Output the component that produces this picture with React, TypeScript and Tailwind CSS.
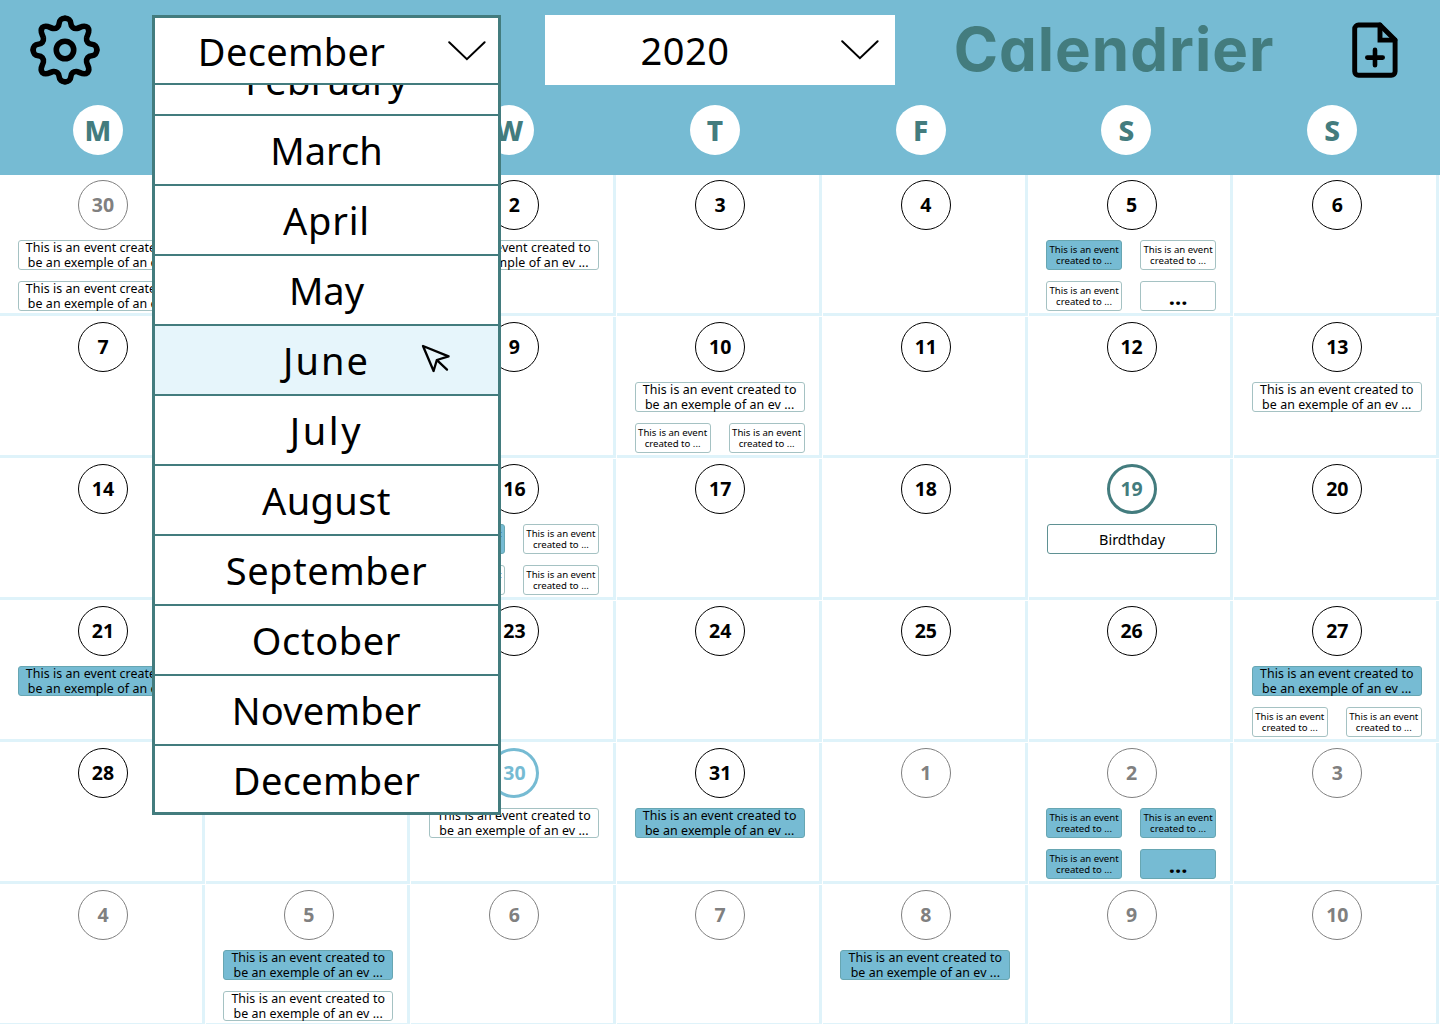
type Tone = "white" | "blue";
type EventItem = { kind: "wide" | "small" | "more" | "named"; tone: Tone };
type Day = { n?: number; look?: "muted" | "today" | "picked"; events?: EventItem[] };

const wide = (tone: Tone): EventItem => ({ kind: "wide", tone });
const small = (tone: Tone): EventItem => ({ kind: "small", tone });
const more = (tone: Tone): EventItem => ({ kind: "more", tone });

// Days without a number lie entirely behind the open month menu.
const DAYS: Day[] = [
  { n: 30, look: "muted", events: [wide("white"), wide("white")] },
  {},
  { n: 2, events: [wide("white")] },
  { n: 3 },
  { n: 4 },
  { n: 5, events: [small("blue"), small("white"), small("white"), more("white")] },
  { n: 6 },
  { n: 7 },
  {},
  { n: 9 },
  { n: 10, events: [wide("white"), small("white"), small("white")] },
  { n: 11 },
  { n: 12 },
  { n: 13, events: [wide("white")] },
  { n: 14 },
  {},
  { n: 16, events: [small("blue"), small("white"), small("white"), small("white")] },
  { n: 17 },
  { n: 18 },
  { n: 19, look: "today", events: [{ kind: "named", tone: "white" }] },
  { n: 20 },
  { n: 21, events: [wide("blue")] },
  {},
  { n: 23 },
  { n: 24 },
  { n: 25 },
  { n: 26 },
  { n: 27, events: [wide("blue"), small("white"), small("white")] },
  { n: 28 },
  {},
  { n: 30, look: "picked", events: [wide("white")] },
  { n: 31, events: [wide("blue")] },
  { n: 1, look: "muted" },
  { n: 2, look: "muted", events: [small("blue"), small("blue"), small("blue"), more("blue")] },
  { n: 3, look: "muted" },
  { n: 4, look: "muted" },
  { n: 5, look: "muted", events: [wide("blue"), wide("white")] },
  { n: 6, look: "muted" },
  { n: 7, look: "muted" },
  { n: 8, look: "muted", events: [wide("blue")] },
  { n: 9, look: "muted" },
  { n: 10, look: "muted" },
];

const MONTHS = [
  { name: "February", spacing: "tracking-[0.3px]" },
  { name: "March", spacing: "tracking-normal" },
  { name: "April", spacing: "tracking-[0.8px]" },
  { name: "May", spacing: "tracking-normal" },
  { name: "June", spacing: "tracking-[2px]" },
  { name: "July", spacing: "tracking-[2.6px]" },
  { name: "August", spacing: "tracking-[0.4px]" },
  { name: "September", spacing: "tracking-[0.5px]" },
  { name: "October", spacing: "tracking-[0.6px]" },
  { name: "November", spacing: "tracking-[0.2px]" },
  { name: "December", spacing: "tracking-[0.3px]" },
];
const WEEKDAYS = ["M", "", "W", "T", "F", "S", "S"];

const LOOKS = {
  normal: "border border-black text-black",
  muted: "border border-[#808080] text-[#808080]",
  today: "border-3 border-[#437c7e] text-[#437c7e]",
  picked: "border-3 border-[#76bbd3] text-[#76bbd3]",
};

function GearIcon() {
  return (
    <svg width="70" height="70" viewBox="-35 -35 70 70" fill="none" stroke="black" strokeWidth="5.6" strokeLinecap="round">
      {[0, 90, 180, 270].map((angle) => (
        <path
          key={angle}
          transform={`rotate(${angle})`}
          d="M0-31.8C3.4-31.8 5.6-29.8 5.8-26.8C6-23.4 8.6-21 12-21.6C15-22 18.6-26 22.6-22.6C26-18.6 22-15 21.6-12C21-8.6 23.4-6 26.8-5.8C29.8-5.6 31.8-3.4 31.8 0"
        />
      ))}
      <circle r="8.7" />
    </svg>
  );
}

function NewFileIcon() {
  return (
    <svg width="46" height="56" viewBox="0 0 46 56" fill="none" stroke="black" strokeWidth="4.9" strokeLinecap="round" strokeLinejoin="round">
      <path d="M28 3H6.5A3.8 3.8 0 0 0 2.7 6.8V49.5A3.8 3.8 0 0 0 6.5 53.3H39.3A3.8 3.8 0 0 0 43.1 49.5V18.1Z" />
      <path d="M28 3V18.1H43" strokeLinejoin="miter" />
      <path d="M23 27.9V43.2M15.3 35.6H30.7" strokeWidth="4.6" />
    </svg>
  );
}

function Chevron() {
  return (
    <svg width="38" height="20" viewBox="0 0 38 20" fill="none" stroke="black" strokeWidth="2" strokeLinecap="round">
      <path d="M1.2 1.2L18.9 18.2L36.6 1.2" />
    </svg>
  );
}

function Cursor() {
  return (
    <svg width="30" height="30" viewBox="0 0 30 30" fill="none" stroke="black" strokeWidth="2.3" strokeLinecap="round" strokeLinejoin="round">
      <path d="M2 2L27.6 12.4L15.8 16L12.6 27ZM16.2 16.4L26 25.6" />
    </svg>
  );
}

function EventCard({ kind, tone }: EventItem) {
  const fill = tone === "blue" ? "bg-[#76bbd3] border-[#67a6b2]" : "bg-white border-[#a5c2c3]";
  if (kind === "wide")
    return (
      <div className={`flex h-[30px] w-[170px] flex-col items-center justify-center rounded-[3px] border text-[12.4px] leading-[15px] tracking-[0.08px] whitespace-nowrap ${fill}`}>
        <span>This is an event created to</span>
        <span>be an exemple of an ev ...</span>
      </div>
    );
  if (kind === "named")
    return (
      <div className="ml-px flex h-[30px] w-[170px] shrink-0 items-center justify-center rounded-[3px] border border-[#5f9193] bg-white pt-[2px] text-[14.4px]">
        Birdthday
      </div>
    );
  if (kind === "more")
    return (
      <div className={`flex h-[30px] w-[76px] items-center justify-center rounded-[3px] border text-[22px] leading-none font-bold ${fill}`}>
        ...
      </div>
    );
  return (
    <div className={`flex h-[30px] w-[76px] flex-col items-center justify-center rounded-[3px] border text-[9.6px] leading-[11px] whitespace-nowrap ${fill}`}>
      <span>This is an event</span>
      <span>created to ...</span>
    </div>
  );
}

function DayCell({ day }: { day: Day }) {
  return (
    <div className="pr-px pb-px">
      <div className="h-[141px] border-r-3 border-b-3 border-[#dff3fa]">
        {day.n !== undefined && (
          <div className="flex w-[206px] flex-col items-center pt-[5px]">
            <div className={`flex size-[50px] items-center justify-center rounded-full text-[19.5px] font-bold ${LOOKS[day.look ?? "normal"]}`}>
              {day.n}
            </div>
            <div className="mt-[10px] w-[171px]">
              <div className="flex flex-wrap gap-x-[18px] gap-y-[11px]">
                {day.events?.map((event, i) => <EventCard key={i} {...event} />)}
              </div>
            </div>
          </div>
        )}
      </div>
    </div>
  );
}

function MonthSelect() {
  return (
    <div className="relative z-10 h-[70px] w-[350px]">
      <div className="absolute top-0 left-0 h-[800px] w-[349px] overflow-hidden border-3 border-[#437c7e] bg-white text-[38px]">
        <div className="flex h-[67px] items-center border-b-2 border-[#437c7e]">
          <div className="w-[273px] text-center leading-[56px] tracking-[0.3px]">December</div>
          <div className="ml-[20px]">
            <Chevron />
          </div>
        </div>
        <div className="h-[727px] overflow-hidden">
          <div className="-mt-[39px]">
            {MONTHS.map(({ name, spacing }) => (
              <div
                key={name}
                className={`relative flex h-[70px] items-center justify-center border-b-2 border-[#437c7e] ${spacing} ${name === "June" ? "bg-[#e6f5fb]" : ""}`}
              >
                {name}
                {name === "June" && (
                  <div className="absolute top-[18px] left-[266px]">
                    <Cursor />
                  </div>
                )}
              </div>
            ))}
          </div>
        </div>
      </div>
    </div>
  );
}

export default function App() {
  return (
    <div className="h-[1024px] w-[1440px] overflow-hidden bg-white font-['Noto_Sans',sans-serif] text-black">
      <header className="h-[175px] bg-[#76bbd3]">
        <div className="flex h-[105px] items-start pt-[15px]">
          <button className="ml-[30px]">
            <GearIcon />
          </button>
          <div className="ml-[52px]">
            <MonthSelect />
          </div>
          <div className="ml-[43px] flex h-[70px] w-[350px] items-center bg-white text-[38px]">
            <div className="w-[280px] text-center tracking-[0.5px]">2020</div>
            <div className="ml-[16px]">
              <Chevron />
            </div>
          </div>
          <h1 className="ml-[55px] flex w-[328px] justify-center font-['Inter',sans-serif] text-[60px] leading-[68px] font-bold tracking-[1px] text-[#437c7e] [font-feature-settings:'cv11']">
            Calendrier
          </h1>
          <button className="mt-[7px] ml-[74px]">
            <NewFileIcon />
          </button>
        </div>
        <div className="grid grid-cols-7">
          {WEEKDAYS.map((letter, i) => (
            <div key={i} className="flex justify-center pr-[10px]">
              {letter && (
                <div className="flex size-[50px] items-center justify-center rounded-full bg-white text-[28px] font-extrabold text-[#437c7e]">
                  {letter}
                </div>
              )}
            </div>
          ))}
        </div>
      </header>
      <main className="grid auto-rows-[142px] grid-cols-7">
        {DAYS.map((day, i) => (
          <DayCell key={i} day={day} />
        ))}
      </main>
    </div>
  );
}
